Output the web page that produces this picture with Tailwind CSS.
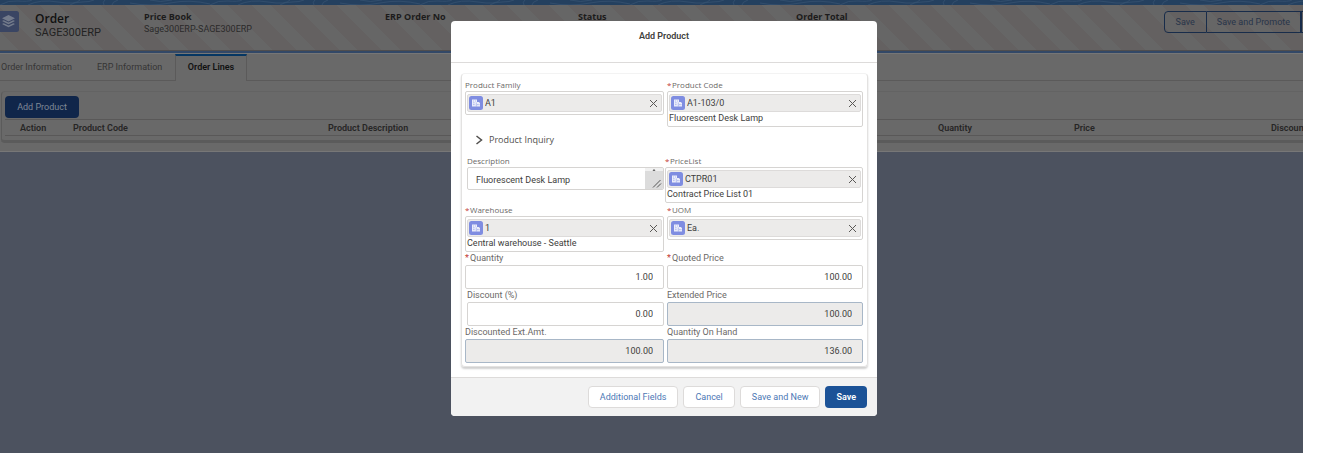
<!DOCTYPE html>
<html lang="en">
<head>
<meta charset="utf-8">
<title>Add Product</title>
<script src="https://cdn.jsdelivr.net/npm/@tailwindcss/browser@4"></script>
</head>
<body class="bg-white font-['Roboto',sans-serif] text-[9px] leading-3 text-[#3e3e3c]">
<svg class="hidden">
  <symbol id="building" viewBox="0 0 14 14">
    <rect width="14" height="14" rx="2.5" fill="#7f8de1"/>
    <path d="M3 3.500h5v2.500h2.200v.8H11v3.700H3z" fill="#fff" opacity=".85"/>
    <path d="M4 5h1M6 5h1M4 6.800h1.600M4 8.600h1.600M8.600 8v1.200M9.900 8v1.200M7.300 6.500v4" stroke="#7f8de1" stroke-width=".5"/>
  </symbol>
  <symbol id="cross" viewBox="0 0 9 9"><path d="M1 1l7 7M8 1l-7 7" stroke="#5a5856" stroke-width="1" fill="none"/></symbol>
</svg>

<div class="relative mr-10 flex h-screen flex-col overflow-hidden bg-[#4c525f]">
  <svg class="h-[5px] w-full shrink-0 bg-[#24405f]" aria-hidden="true">
    <defs><pattern id="waves" width="210" height="5" patternUnits="userSpaceOnUse">
      <path d="M0 5q8-5 18-4t14-1M28 5q12-6 30-3t22-2M70 5q4-3 12-3t12-2M104 5q-2-3 1-5M112 5q0-3 6-5M130 3q20 4 40 0t40 1M150 0q10 3 22 0" fill="none" stroke="#35516f" stroke-width=".8"/>
    </pattern></defs>
    <rect width="100%" height="5" fill="url(#waves)"/>
  </svg>

  <header class="relative h-[46px] shrink-0 border-b border-[#4f4d4d] bg-[repeating-linear-gradient(45deg,#666666_0px,#666666_13px,#646161_13px,#646161_30px)] pt-1.5">
    <div class="grid grid-cols-[35px_109px_241px_193px_218px_1fr] text-[#1c1b1b]">
      <svg class="h-[21px] w-[19px]" viewBox="0 0 19 21" aria-hidden="true">
        <path d="M0 0h16.500a2.500 2.500 0 0 1 2.500 2.500v16a2.500 2.500 0 0 1-2.500 2.500H0z" fill="#3a4563"/>
        <g fill="#747b8b"><path d="M8.500 4l6.500 3.200-6.500 3.200L2 7.200z"/><path d="M2 10l1.700-.8 4.800 2.300 4.800-2.300 1.700.8-6.500 3.200z"/><path d="M2 13l1.700-.8 4.800 2.300 4.800-2.300 1.700.8-6.500 3.200z"/></g>
      </svg>
      <div>
        <h1 class="font-['Open_Sans',sans-serif] text-[12px] leading-4 font-semibold text-[#111]">Order</h1>
        <p class="text-[11px] leading-3 text-[#222]">SAGE300ERP</p>
      </div>
      <div><h2 class="font-['Open_Sans',sans-serif] font-bold">Price Book</h2><p class="text-[#2b2a2a]">Sage300ERP-SAGE300ERP</p></div>
      <h2 class="font-['Open_Sans',sans-serif] font-bold">ERP Order No</h2>
      <h2 class="font-['Open_Sans',sans-serif] font-bold">Status</h2>
      <div class="flex justify-between">
        <h2 class="font-['Open_Sans',sans-serif] font-bold">Order Total</h2>
        <div class="flex h-[22px] text-[#28354a]">
          <button class="rounded-l-sm border border-[#182c4a] px-[11px]">Save</button>
          <button class="border-y border-r border-[#182c4a] px-2.5">Save and Promote</button>
          <span class="w-0.5 border-y border-l border-[#182c4a]"></span>
        </div>
      </div>
    </div>
  </header>
  <div class="h-0.5 shrink-0 bg-[#324867]"></div>

  <main class="flex h-[99px] shrink-0 flex-col border-b border-[#777] bg-[#696969]">
    <nav class="flex h-7 border-t border-[#767676] text-[#363535]">
      <a href="#" class="w-[86px] border-b border-[#5b5a5a] pt-[7px] pl-px">Order Information</a>
      <a href="#" class="w-[89px] border-b border-[#5b5a5a] pt-[7px] pl-[11px]">ERP Information</a>
      <a href="#" class="w-[72px] border-x border-t-2 border-x-[#5b5a5a] border-t-[#063763] pt-[5px] text-center font-semibold text-[#111]">Order Lines</a>
      <div class="grow border-b border-[#5b5a5a]"></div>
    </nav>
    <section class="mt-2.5 ml-px h-[52px] overflow-hidden rounded-l-sm border-t border-b-3 border-l border-t-[#636363] border-b-[#5b5b5b] border-l-[#5b5b5b] pt-1 pl-[3px]">
      <button class="block h-[22px] w-[74px] rounded-sm bg-[#10264a] text-[#7f8896]">Add Product</button>
      <table class="mt-px w-[1400px] table-fixed border-y border-[#595858] text-left font-semibold text-[#262525]">
        <colgroup><col class="w-[68px]"><col class="w-[255px]"><col class="w-[610px]"><col class="w-[136px]"><col class="w-[197px]"><col></colgroup>
        <tr class="h-4 *:p-0 *:font-semibold"><th class="pl-[15px]!">Action</th><th>Product Code</th><th>Product Description</th><th>Quantity</th><th>Price</th><th>Discount</th></tr>
      </table>
    </section>
  </main>
</div>

<div class="absolute inset-0 flex justify-center pt-[21px] pr-[15px]">
  <form role="dialog" aria-labelledby="title" class="flex w-[426px] flex-col self-start overflow-hidden rounded-sm bg-white">
    <h2 id="title" class="h-[42px] border-b border-[#dddbda] pt-[9px] text-center font-semibold">Add Product</h2>

    <div class="pt-2.5 pr-[9px] pb-2.5 pl-2.5">
      <div class="rounded-sm border border-[#e3e2e1] border-t-[#f3f3f3] pt-1 pr-1 pb-[3px] pl-[3px] shadow-[0_2px_2px_#d0d0d0]">
        <div class="grid grid-cols-[199fr_196fr] items-start gap-x-[3px]">
          <div>
            <label for="family" class="block h-[13px] font-['Open_Sans',sans-serif] text-[8px] leading-[14px] text-[#6b6967]">Product Family</label>
            <div class="h-6 rounded-xs border border-[#d6d4d2] px-px py-0.5">
              <div class="flex h-[18px] items-center rounded-xs border border-[#dddbda] bg-[#ecebea] px-px"><svg class="size-3.5 shrink-0"><use href="#building"/></svg><input id="family" readonly value="A1" class="ml-0.5 w-0 grow outline-none"><button type="button" aria-label="Clear" class="mr-0.5"><svg class="size-[9px]"><use href="#cross"/></svg></button></div>
            </div>
          </div>
          <div>
            <label for="code" class="flex h-[13px] font-['Open_Sans',sans-serif] text-[8px] leading-[14px] text-[#6b6967]"><span class="w-[5px] shrink-0 text-[#c23934]">*</span>Product Code</label>
            <div class="h-9 rounded-xs border border-[#d6d4d2] px-px py-0.5">
              <div class="flex h-[18px] items-center rounded-xs border border-[#dddbda] bg-[#ecebea] px-px"><svg class="size-3.5 shrink-0"><use href="#building"/></svg><input id="code" readonly value="A1-103/0" class="ml-0.5 w-0 grow outline-none"><button type="button" aria-label="Clear" class="mr-0.5"><svg class="size-[9px]"><use href="#cross"/></svg></button></div>
              <p>Fluorescent Desk Lamp</p>
            </div>
          </div>
        </div>

        <button type="button" class="flex h-[27px] items-center pb-0.5 pl-2.5 font-['Open_Sans',sans-serif] text-[#514f4d]"><svg class="mr-1.5 h-2.5 w-2" viewBox="0 0 8 10"><path d="M1.500 1L6.500 5 1.500 9" fill="none" stroke="#514f4d" stroke-width="1.500"/></svg>Product Inquiry</button>

        <div class="grid grid-cols-[199fr_198fr] items-start gap-x-px">
          <div class="pl-0.5">
            <label for="desc" class="block h-[13px] font-['Open_Sans',sans-serif] text-[8px] leading-[14px] text-[#6b6967]">Description</label>
            <div class="flex h-[23px] overflow-hidden rounded-xs border border-[#d6d4d2]">
              <textarea id="desc" rows="1" class="block h-full w-0 grow resize-none overflow-hidden pt-1.5 pl-2 outline-none">Fluorescent Desk Lamp</textarea>
              <svg class="h-full w-[18px] bg-[#dcdcdc]" viewBox="0 0 18 21"><path d="M0 0h18v3H0z" fill="#f1f1f1"/><path d="M8 2.500l1-1 1 1z" fill="#444" stroke="#444" stroke-width=".6"/><path d="M8 19.500l7.500-7.500M12 19.500l4-4" stroke="#555" fill="none"/></svg>
            </div>
          </div>
          <div>
            <label for="pricelist" class="flex h-[13px] font-['Open_Sans',sans-serif] text-[8px] leading-[14px] text-[#6b6967]"><span class="w-[5px] shrink-0 text-[#c23934]">*</span>PriceList</label>
            <div class="h-9 rounded-xs border border-[#d6d4d2] px-px py-0.5">
              <div class="flex h-[18px] items-center rounded-xs border border-[#dddbda] bg-[#ecebea] px-px"><svg class="size-3.5 shrink-0"><use href="#building"/></svg><input id="pricelist" readonly value="CTPR01" class="ml-0.5 w-0 grow outline-none"><button type="button" aria-label="Clear" class="mr-0.5"><svg class="size-[9px]"><use href="#cross"/></svg></button></div>
              <p>Contract Price List 01</p>
            </div>
          </div>
        </div>

        <div class="grid grid-cols-[199fr_196fr] items-start gap-x-[3px]">
          <div>
            <label for="wh" class="flex h-[13px] font-['Open_Sans',sans-serif] text-[8px] leading-[14px] text-[#6b6967]"><span class="w-[5px] shrink-0 text-[#c23934]">*</span>Warehouse</label>
            <div class="h-9 rounded-xs border border-[#d6d4d2] px-px py-0.5">
              <div class="flex h-[18px] items-center rounded-xs border border-[#dddbda] bg-[#ecebea] px-px"><svg class="size-3.5 shrink-0"><use href="#building"/></svg><input id="wh" readonly value="1" class="ml-0.5 w-0 grow outline-none"><button type="button" aria-label="Clear" class="mr-0.5"><svg class="size-[9px]"><use href="#cross"/></svg></button></div>
              <p>Central warehouse - Seattle</p>
            </div>
          </div>
          <div>
            <label for="uom" class="flex h-[13px] font-['Open_Sans',sans-serif] text-[8px] leading-[14px] text-[#6b6967]"><span class="w-[5px] shrink-0 text-[#c23934]">*</span>UOM</label>
            <div class="h-6 rounded-xs border border-[#d6d4d2] px-px py-0.5">
              <div class="flex h-[18px] items-center rounded-xs border border-[#dddbda] bg-[#ecebea] px-px"><svg class="size-3.5 shrink-0"><use href="#building"/></svg><input id="uom" readonly value="Ea." class="ml-0.5 w-0 grow outline-none"><button type="button" aria-label="Clear" class="mr-0.5"><svg class="size-[9px]"><use href="#cross"/></svg></button></div>
            </div>
          </div>

          <div>
            <label for="qty" class="flex h-[13px] text-[#6b6967]"><span class="w-[5px] shrink-0 text-[#c23934]">*</span>Quantity</label>
            <input id="qty" value="1.00" class="block h-6 w-full rounded-xs border border-[#d6d4d2] px-2.5 text-right">
          </div>
          <div>
            <label for="quoted" class="flex h-[13px] text-[#6b6967]"><span class="w-[5px] shrink-0 text-[#c23934]">*</span>Quoted Price</label>
            <input id="quoted" value="100.00" class="block h-6 w-full rounded-xs border border-[#d6d4d2] px-2.5 text-right">
          </div>
          <div class="pl-0.5">
            <label for="disc" class="block h-[13px] text-[#6b6967]">Discount (%)</label>
            <input id="disc" value="0.00" class="block h-6 w-full rounded-xs border border-[#d6d4d2] px-2.5 text-right">
          </div>
          <div>
            <label for="ext" class="block h-[13px] text-[#6b6967]">Extended Price</label>
            <input id="ext" readonly value="100.00" class="block h-6 w-full rounded-xs border border-[#a8b7c7] bg-[#ecebea] px-2.5 text-right">
          </div>
          <div>
            <label for="dext" class="block h-[13px] text-[#6b6967]">Discounted Ext.Amt.</label>
            <input id="dext" readonly value="100.00" class="block h-6 w-full rounded-xs border border-[#a8b7c7] bg-[#ecebea] px-2.5 text-right">
          </div>
          <div>
            <label for="onhand" class="block h-[13px] text-[#6b6967]">Quantity On Hand</label>
            <input id="onhand" readonly value="136.00" class="block h-6 w-full rounded-xs border border-[#a8b7c7] bg-[#ecebea] px-2.5 text-right">
          </div>
        </div>
      </div>
    </div>

    <footer class="flex justify-end gap-[5px] border-t border-[#dddbda] bg-[#f2f2f2] pt-2 pr-2.5 pb-2 text-[#4c78b5]">
      <button type="button" class="h-[22px] rounded-sm border border-[#dddbda] bg-white px-[11px]">Additional Fields</button>
      <button type="button" class="h-[22px] rounded-sm border border-[#dddbda] bg-white px-[11px]">Cancel</button>
      <button type="button" class="h-[22px] rounded-sm border border-[#dddbda] bg-white px-[11px]">Save and New</button>
      <button class="h-[22px] rounded-sm bg-[#1b5297] px-[11px] font-semibold text-white">Save</button>
    </footer>
  </form>
</div>
</body>
</html>
